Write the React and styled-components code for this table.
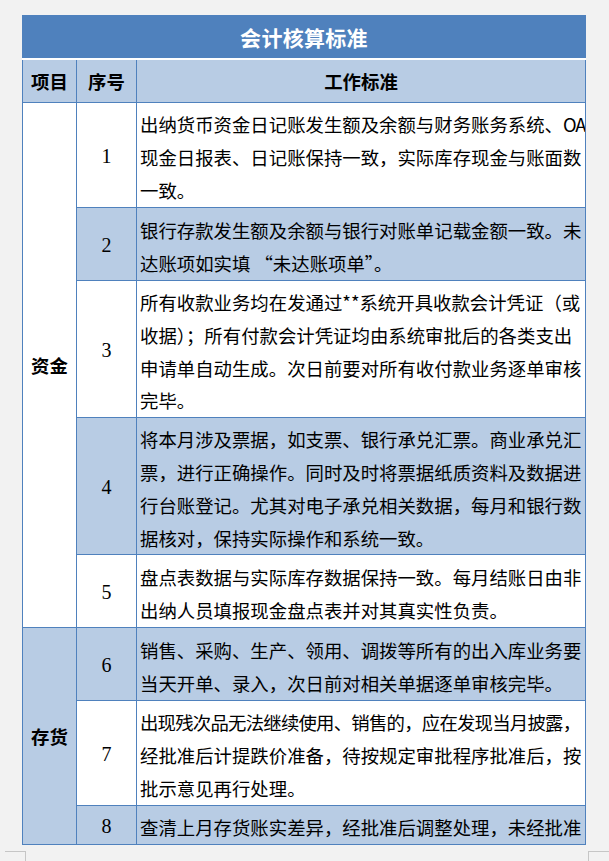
import React from 'react';
import styled, { createGlobalStyle } from 'styled-components';

const GlobalStyle = createGlobalStyle`
  html, body { margin: 0; padding: 0; background: #f2f2f2; }
  body {
    font-family: "Noto Sans CJK SC", "Noto Sans", sans-serif;
    color: #000;
  }
`;

const BLUE = '#4f81bd';
const LIGHT = '#b8cce4';

const Page = styled.div`
  width: 609px;
  height: 861px;
  overflow: hidden;
  display: flex;
  flex-direction: column;
`;

const SheetWrap = styled.div`
  padding: 15px 0 0 22px;
`;

const Sheet = styled.table`
  border-collapse: collapse;
  table-layout: fixed;
  width: 563px;
`;

const Col = styled.col`
  width: ${(p) => p.$w}px;
`;

const TitleCell = styled.td`
  height: 42px;
  background: ${BLUE};
  border: 1px solid ${BLUE};
  border-bottom: 2px solid #fff;
  color: #fff;
  font-size: 21px;
  font-weight: 700;
  text-align: center;
  vertical-align: middle;
  padding: 0;
  letter-spacing: 0.3px;
`;

const HeadCell = styled.th`
  height: 42px;
  background: ${LIGHT};
  border: 1px solid ${BLUE};
  font-size: 18.4px;
  font-weight: 700;
  text-align: center;
  vertical-align: middle;
  padding: 0;
`;

const Row = styled.tr`
  height: ${(p) => p.$h}px;
`;

const GroupCell = styled.td`
  background: ${(p) => (p.$shade ? LIGHT : '#fff')};
  border: 1px solid ${BLUE};
  font-size: 18.4px;
  font-weight: 700;
  text-align: center;
  vertical-align: middle;
  padding: 0;
`;

const NoCell = styled.td`
  background: ${(p) => (p.$shade ? LIGHT : '#fff')};
  border: 1px solid ${BLUE};
  font-family: "Liberation Serif", serif;
  font-size: 20px;
  text-align: center;
  vertical-align: middle;
  padding: 3px 0 0 0;
`;

const TextCell = styled.td`
  background: ${(p) => (p.$shade ? LIGHT : '#fff')};
  border: 1px solid ${BLUE};
  vertical-align: middle;
  padding: 5px 0 0 3px;
`;

const Lines = styled.div`
  overflow: hidden;
  white-space: nowrap;
  font-size: 18.4px;
  line-height: 32.8px;
`;

const Line = styled.div`
  letter-spacing: ${(p) => (p.$tight ? '-0.78px' : 'normal')};
`;

const Latin = styled.span`
  letter-spacing: -1.2px;
`;

const Corners = styled.div`
  display: flex;
  justify-content: space-between;
  padding-left: 5px;
  margin-top: 6px;
`;

const CornerMark = styled.div`
  width: 20px;
  height: 14px;
  border-top: 1px solid #c6c6c6;
  ${(p) => (p.$side === 'left' ? 'border-right: 1px solid #c6c6c6;' : 'border-left: 1px solid #c6c6c6;')}
`;

const sections = [
  {
    name: '资金',
    rows: [
      {
        no: 1,
        h: 105,
        lines: [
          { text: '出纳货币资金日记账发生额及余额与财务账务系统、', latin: 'OA' },
          '现金日报表、日记账保持一致，实际库存现金与账面数',
          '一致。',
        ],
      },
      {
        no: 2,
        h: 73,
        lines: ['银行存款发生额及余额与银行对账单记载金额一致。未', '达账项如实填 “未达账项单”。'],
      },
      {
        no: 3,
        h: 136,
        lines: [
          '所有收款业务均在发通过**系统开具收款会计凭证（或',
          '收据）；所有付款会计凭证均由系统审批后的各类支出',
          '申请单自动生成。次日前要对所有收付款业务逐单审核',
          '完毕。',
        ],
      },
      {
        no: 4,
        h: 137,
        lines: [
          '将本月涉及票据，如支票、银行承兑汇票。商业承兑汇',
          '票，进行正确操作。同时及时将票据纸质资料及数据进',
          '行台账登记。尤其对电子承兑相关数据，每月和银行数',
          '据核对，保持实际操作和系统一致。',
        ],
      },
      {
        no: 5,
        h: 73,
        lines: ['盘点表数据与实际库存数据保持一致。每月结账日由非', '出纳人员填报现金盘点表并对其真实性负责。'],
      },
    ],
  },
  {
    name: '存货',
    rows: [
      {
        no: 6,
        h: 73,
        lines: ['销售、采购、生产、领用、调拨等所有的出入库业务要', '当天开单、录入，次日前对相关单据逐单审核完毕。'],
      },
      {
        no: 7,
        h: 104,
        lines: [
          { text: '出现残次品无法继续使用、销售的，应在发现当月披露，', tight: true },
          '经批准后计提跌价准备，待按规定审批程序批准后，按',
          '批示意见再行处理。',
        ],
      },
      {
        no: 8,
        h: 39,
        lines: ['查清上月存货账实差异，经批准后调整处理，未经批准'],
      },
    ],
  },
];

function renderLine(l, key) {
  if (typeof l === 'string') return <Line key={key}>{l}</Line>;
  return (
    <Line key={key} $tight={l.tight}>
      {l.text}
      {l.latin && <Latin>{l.latin}</Latin>}
    </Line>
  );
}

export default function App() {
  let idx = 0;
  return (
    <Page>
      <GlobalStyle />
      <SheetWrap>
        <Sheet>
          <colgroup>
            <Col $w={54} />
            <Col $w={60} />
            <Col $w={449} />
          </colgroup>
          <thead>
            <tr>
              <TitleCell colSpan={3}>会计核算标准</TitleCell>
            </tr>
            <tr>
              <HeadCell>项目</HeadCell>
              <HeadCell>序号</HeadCell>
              <HeadCell>工作标准</HeadCell>
            </tr>
          </thead>
          <tbody>
            {sections.map((sec, si) =>
              sec.rows.map((r, ri) => {
                const shade = idx % 2 === 1;
                idx += 1;
                return (
                  <Row key={r.no} $h={r.h}>
                    {ri === 0 && (
                      <GroupCell rowSpan={sec.rows.length} $shade={si === 1}>
                        {sec.name}
                      </GroupCell>
                    )}
                    <NoCell $shade={shade}>{r.no}</NoCell>
                    <TextCell $shade={shade}>
                      <Lines>{r.lines.map((l, li) => renderLine(l, li))}</Lines>
                    </TextCell>
                  </Row>
                );
              })
            )}
          </tbody>
        </Sheet>
      </SheetWrap>
      <Corners>
        <CornerMark $side="left" />
        <CornerMark $side="right" />
      </Corners>
    </Page>
  );
}
